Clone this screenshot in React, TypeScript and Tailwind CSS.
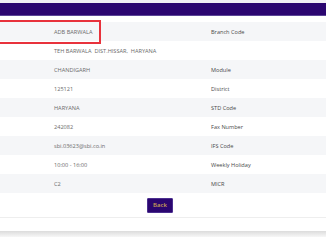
import React from 'react';

const rows: [string, string][] = [
  ['ADB BARWALA', 'Branch Code'],
  ['TEH BARWALA  DIST.HISSAR,  HARYANA', ''],
  ['CHANDIGARH', 'Module'],
  ['125121', 'District'],
  ['HARYANA', 'STD Code'],
  ['242082', 'Fax Number'],
  ['sbi.03623@sbi.co.in', 'IFS Code'],
  ['10:00 - 16:00', 'Weekly Holiday'],
  ['C2', 'MICR'],
];

export default function App() {
  return (
    <div className="relative h-[245px] w-[326px] overflow-hidden bg-white font-['Open_Sans',sans-serif]">
      {/* top bar */}
      <div className="h-[3px] bg-[#f1eff5]" />
      <div className="h-[13px] border-b border-[#5b4596] bg-[#2b0670]" />
      <div className="h-[6px]" />

      {/* detail rows */}
      {rows.map(([value, label], i) => (
        <div
          key={i}
          className={`flex h-[19px] items-center pt-px text-[5.6px] ${
            i % 2 === 0 ? 'bg-[#f5f6f8]' : 'bg-white'
          }`}
        >
          <span className="w-[211px] shrink-0 whitespace-pre pl-[54px] text-[#6b6b6b]">{value}</span>
          <span className="whitespace-nowrap text-[#4a4a4a]">{label}</span>
        </div>
      ))}

      {/* back button */}
      <div className="flex h-[25px] items-center justify-center border-b border-[#eeeeee] pr-[6px]">
        <button className="h-[15px] w-[26px] rounded-[1px] border border-[#4b2f8f] bg-[#2b0670] text-[6px] font-semibold text-[#c9a055]">
          Back
        </button>
      </div>
      <div className="h-[13px] bg-white" />
      <div className="h-[6px] bg-gradient-to-b from-[#dcdcdc] to-[#f7f7f7]" />

      {/* highlight box */}
      <div className="absolute left-[-4px] top-[20px] h-[24px] w-[105px] border-2 border-[#e8323c]" />
    </div>
  );
}
